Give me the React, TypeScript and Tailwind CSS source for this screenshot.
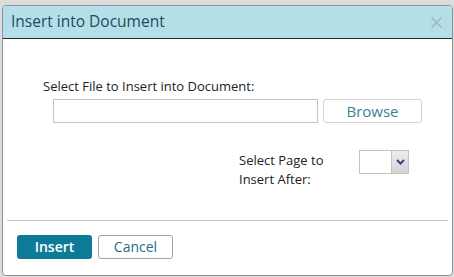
import { useState } from "react";

export default function App() {
  const [page, setPage] = useState("");

  return (
    <div className="w-[454px] h-[277px] bg-[#dcdcdc] pt-[5px] pl-[2px] pr-[1px] font-['Open_Sans',sans-serif]">
      <div className="h-[271px] flex flex-col bg-white border border-[#8b929a] rounded-[4px] overflow-hidden">
        {/* Title bar */}
        <div className="h-[33px] shrink-0 flex items-center justify-between bg-[#b5dfe8] border-b border-[#2a2a2a] pl-[8px] pr-[10px]">
          <span className="text-[15.5px] text-[#1d4b5e] leading-none">Insert into Document</span>
          <button className="text-[#9ab7bf]">
            <svg width="11" height="11" viewBox="0 0 11 11" fill="none" stroke="currentColor" strokeWidth="1.4">
              <path d="M0.5 0.5 L10.5 10.5 M10.5 0.5 L0.5 10.5" />
            </svg>
          </button>
        </div>

        {/* Body */}
        <div className="flex-1 flex flex-col pt-[38px] text-[13px] text-[#222]">
          <label className="pl-[40px] leading-[18px]">Select File to Insert into Document:</label>
          <div className="flex gap-[5px] pl-[50px] mt-[4px]">
            <input className="w-[265px] h-[24px] border border-[#c4c4c4] outline-none" />
            <button className="w-[99px] h-[24px] border border-[#d3d3d3] rounded-[3px] text-[15px] text-[#3d7f97] leading-none">
              Browse
            </button>
          </div>

          <div className="flex items-start pl-[236px] mt-[27px]">
            <label className="w-[120px] leading-[19px] pt-[1px]">
              Select Page to
              <br />
              Insert After:
            </label>
            <div className="flex h-[24px] w-[50px] border border-[#c2c2c2]">
              <div className="flex-1 bg-white text-[12px]">{page}</div>
              <button
                onClick={() => setPage(page)}
                className="w-[17px] flex items-center justify-center bg-gradient-to-b from-[#ededed] to-[#d3d3d3] border-l border-[#c2c2c2]"
              >
                <svg width="9" height="6" viewBox="0 0 9 6" fill="none" stroke="#2a4a7a" strokeWidth="2">
                  <path d="M1 1 L4.5 4.5 L8 1" />
                </svg>
              </button>
            </div>
          </div>

          <div className="mt-auto mx-[4px] border-t border-[#c0c0c0]" />
          <div className="flex gap-[6px] pl-[14px] pt-[14px] pb-[16px]">
            <button className="w-[75px] h-[24px] rounded-[3px] bg-[#0d7b98] text-white text-[14px] font-semibold leading-none">
              Insert
            </button>
            <button className="w-[75px] h-[24px] rounded-[3px] border border-[#a4a4a4] text-[#1f6c88] text-[14px] leading-none">
              Cancel
            </button>
          </div>
        </div>
      </div>
    </div>
  );
}
